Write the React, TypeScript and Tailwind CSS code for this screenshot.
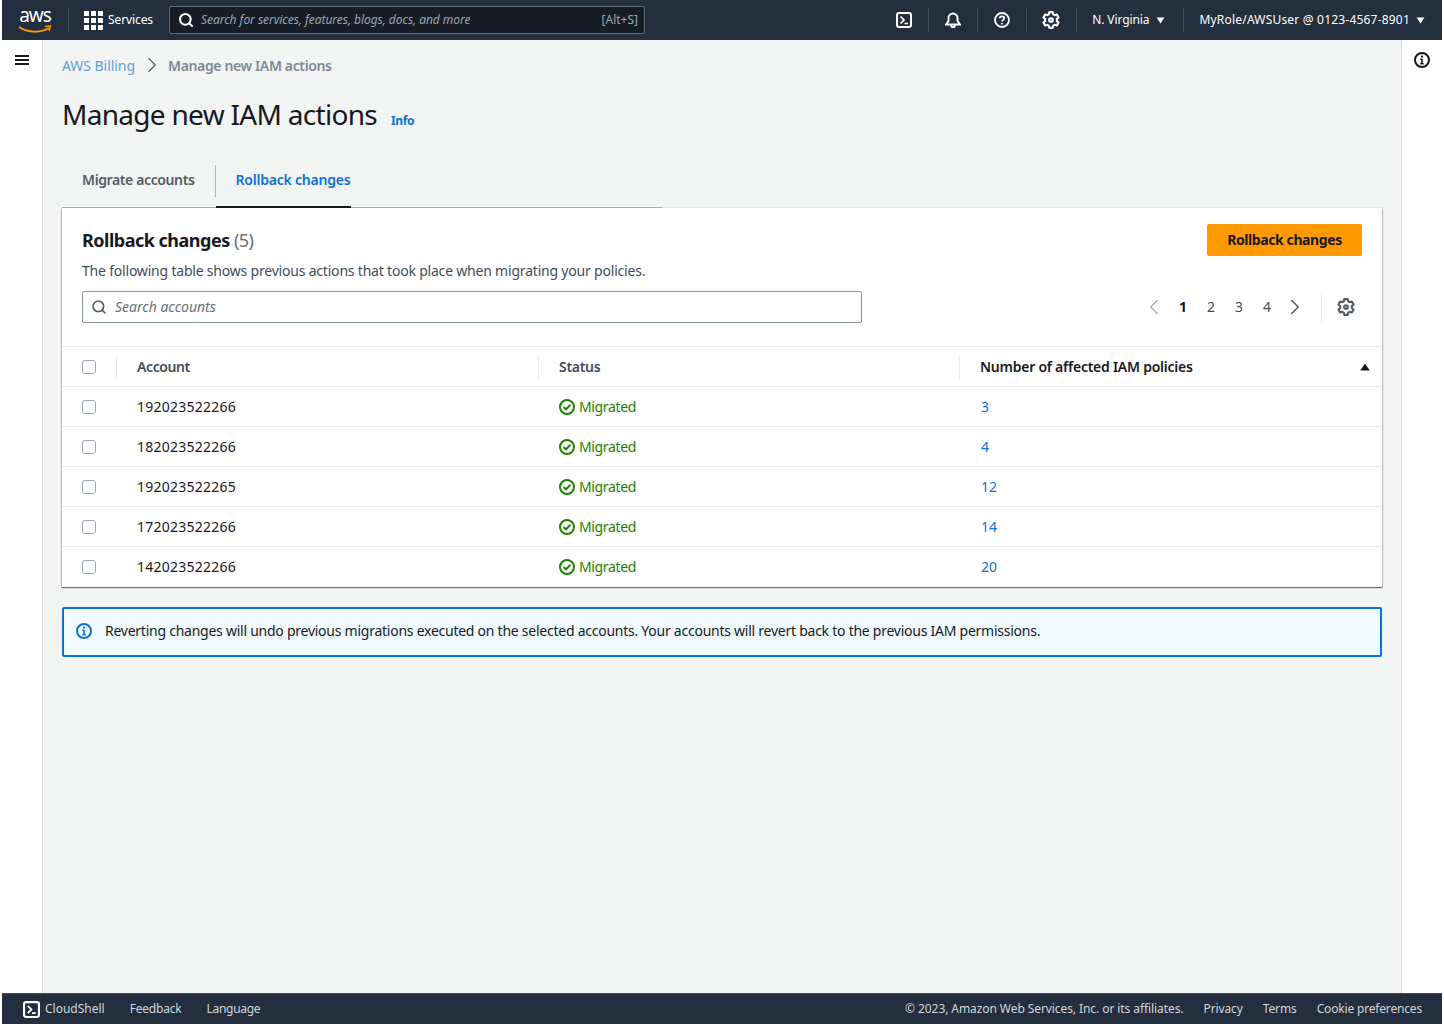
import React from "react";
import { ChevronLeft, ChevronRight, Search } from "lucide-react";

const font = "font-['Noto_Sans',sans-serif]";

const rows = [
  { account: "192023522266", count: "3" },
  { account: "182023522266", count: "4" },
  { account: "192023522265", count: "12" },
  { account: "172023522266", count: "14" },
  { account: "142023522266", count: "20" },
];

const Divider = () => <div className="h-[24px] w-px bg-[#414d5c]" />;

const Caret = ({ className = "" }: { className?: string }) => (
  <svg viewBox="0 0 10 8" className={className} fill="currentColor">
    <path d="M0.5 0.5h9L5 7.5z" />
  </svg>
);

const ShellIcon = ({ className = "" }: { className?: string }) => (
  <svg viewBox="0 0 16 16" className={className} fill="none" stroke="currentColor" strokeWidth="2">
    <rect x="1" y="1" width="14" height="14" rx="2" />
    <path d="M4.5 4.5 8 8l-3.5 3.5M8.5 11.5h3.5" strokeWidth="1.7" />
  </svg>
);

const InfoIcon = ({ className = "" }: { className?: string }) => (
  <svg viewBox="0 0 16 16" className={className} fill="none" stroke="currentColor" strokeWidth="2">
    <circle cx="8" cy="8" r="7" />
    <path d="M8 7v5M6.3 7.2H8M6.3 11.8h3.4" strokeWidth="1.6" />
    <path d="M8 3.6v1.8" strokeWidth="2" />
  </svg>
);

const CheckCircle = () => (
  <svg viewBox="0 0 16 16" className="h-4 w-4 text-[#1d8102]" fill="none" stroke="currentColor" strokeWidth="2">
    <circle cx="8" cy="8" r="7" />
    <path d="M4.6 8 7 10.4 11.4 5.8" />
  </svg>
);

const Checkbox = () => <div className="h-[14px] w-[14px] rounded-[3px] border border-[#9ba7b6] bg-white" />;

const GridIcon = () => (
  <div className="grid grid-cols-3 gap-[2px]">
    {Array.from({ length: 9 }).map((_, i) => (
      <div key={i} className="h-[5px] w-[5px] bg-white" />
    ))}
  </div>
);

// cog drawn by hand, lucide's has thinner teeth
const Gear = ({ className = "" }: { className?: string }) => (
  <svg viewBox="0 0 16 16" className={className} fill="none" stroke="currentColor" strokeWidth="1.9" strokeLinejoin="round">
    <path d="M6.5 1h3l.5 2 1.2.7 2-.6 1.5 2.6-1.5 1.4v1.8l1.5 1.4-1.5 2.6-2-.6-1.2.7-.5 2h-3l-.5-2-1.2-.7-2 .6-1.5-2.6 1.5-1.4V7.1L1.3 5.7l1.5-2.6 2 .6L6 3z" />
    <circle cx="8" cy="8" r="1.6" />
  </svg>
);

const Header = () => (
  <header className="flex h-10 shrink-0 items-center bg-[#232f3e] text-white">
    <div className="ml-[15px] flex w-[36px] flex-col items-center">
      <span className="h-[17px] text-[19px] leading-[17px] tracking-[-1px]">aws</span>
      <svg viewBox="0 0 34 9" className="mt-[1px] h-[9px] w-[34px]" fill="none">
        <path d="M1 2c9 6 22 6 30 1" stroke="#ff9900" strokeWidth="2" />
        <path d="M27 1.5 32.5 1 31 6" stroke="#ff9900" strokeWidth="1.4" />
      </svg>
    </div>
    <div className="ml-[15px] h-[24px] w-px bg-[#414d5c]" />
    <div className="ml-[15px] flex items-center gap-[5px]">
      <GridIcon />
      <span className="text-[12px] tracking-[-0.1px]">Services</span>
    </div>
    <div className="ml-[16px] flex h-[28px] w-[476px] items-center rounded-[2px] border border-[#5f6b7a] bg-[#161d26] pl-[8px] pr-[6px]">
      <Search className="h-4 w-4" strokeWidth={3} />
      <span className="ml-[7px] flex-1 text-[12px] italic tracking-[-0.04px] text-[#95a5b4]">Search for services, features, blogs, docs, and more</span>
      <span className="text-[12px] text-[#95a5b4]">[Alt+S]</span>
    </div>
    <div className="ml-auto flex items-center">
      <ShellIcon className="h-[16px] w-[16px]" />
      <div className="ml-[16px]"><Divider /></div>
      <svg viewBox="0 0 16 16" className="ml-[16px] h-[16px] w-[16px]" fill="none" stroke="currentColor" strokeWidth="1.9">
        <path d="M1 12.5h14L12.5 9V6a4.5 4.5 0 0 0-9 0v3zM8 .5v1.5M6 13c0 3 4 3 4 0" />
      </svg>
      <div className="ml-[16px]"><Divider /></div>
      <svg viewBox="0 0 16 16" className="ml-[16px] h-[16px] w-[16px]" fill="none" stroke="currentColor" strokeWidth="1.8">
        <circle cx="8" cy="8" r="7" />
        <path d="M5.8 6.2C5.8 3.7 10.2 3.7 10.2 6.2 10.2 7.8 8 7.9 8 9.6M8 11v1.6" />
      </svg>
      <div className="ml-[16px]"><Divider /></div>
      <Gear className="ml-[15px] h-[18px] w-[18px]" />
      <div className="ml-[16px]"><Divider /></div>
      <span className="ml-[15px] text-[12px] tracking-[-0.1px]">N. Virginia</span>
      <Caret className="ml-[7px] h-[7px] w-[9px]" />
      <div className="ml-[18px]"><Divider /></div>
      <span className="ml-[15px] text-[12px] tracking-[0.2px]">MyRole/AWSUser @ 0123-4567-8901</span>
      <Caret className="ml-[6px] mr-[17px] h-[7px] w-[9px]" />
    </div>
  </header>
);

const Footer = () => (
  <footer className="flex h-[31px] shrink-0 items-center border-t border-[#414d5c] bg-[#232f3e] text-[12px] text-[#d1d5db]">
    <ShellIcon className="ml-[21px] h-[17px] w-[17px] text-white" />
    <span className="ml-[5px]">CloudShell</span>
    <span className="ml-[25px] tracking-[-0.2px]">Feedback</span>
    <span className="ml-[25px] tracking-[-0.3px]">Language</span>
    <div className="ml-auto mr-[20px] flex gap-[20px]">
      <span className="tracking-[-0.08px]">© 2023, Amazon Web Services, Inc. or its affiliates.</span>
      <span className="tracking-[-0.12px]">Privacy</span>
      <span className="tracking-[-0.12px]">Terms</span>
      <span className="tracking-[-0.17px]">Cookie preferences</span>
    </div>
  </footer>
);

const Table = () => (
  <div className="text-[14px]">
    <div className="flex h-[41px] items-center border-y border-[#e9ebed] font-semibold text-[#414d5c]">
      <div className="flex w-[55px] items-center justify-between pl-5">
        <Checkbox />
        <div className="h-6 w-px bg-[#e9ebed]" />
      </div>
      <div className="flex h-6 w-[422px] items-center border-r border-[#e9ebed] pl-5 tracking-[-0.4px]">Account</div>
      <div className="flex h-6 w-[421px] items-center border-r border-[#e9ebed] pl-5 tracking-[-0.3px]">Status</div>
      <div className="flex h-6 flex-1 items-center pl-5 pr-3 text-[#16191f]">
        <span className="tracking-[-0.25px]">Number of affected IAM policies</span>
        <svg viewBox="0 0 10 8" className="ml-auto h-[8px] w-[10px] fill-[#16191f]"><path d="M5 0.5 9.8 7.5H.2z" /></svg>
      </div>
    </div>
    {rows.map((r, i) => (
      <div key={r.account} className={`flex h-10 items-center border-b text-[#16191f] ${i < rows.length - 1 ? "border-[#e9ebed]" : "border-transparent"}`}>
        <div className="w-[55px] pl-5"><Checkbox /></div>
        <div className="w-[422px] pl-5 tracking-[0.25px]">{r.account}</div>
        <div className="flex w-[421px] items-center gap-1 pl-5 tracking-[-0.35px] text-[#1d8102]">
          <CheckCircle />
          Migrated
        </div>
        <div className="pl-[21px] text-[#0972d3]">{r.count}</div>
      </div>
    ))}
  </div>
);

const Card = () => (
  <section className="bg-white shadow-[0_0_1px_0_rgba(0,28,36,0.3),0_1px_1px_0_rgba(0,28,36,0.4),1px_1px_1px_0_rgba(0,28,36,0.15),-1px_1px_1px_0_rgba(0,28,36,0.15)]">
    <div className="flex items-start px-5 pt-4">
      <div className="flex-1">
        <h2 className="h-8 text-[18px] font-bold leading-8 tracking-[-0.5px] text-[#16191f]">
          Rollback changes <span className="font-normal text-[#687078]">(5)</span>
        </h2>
        <p className="mt-[7px] text-[14px] leading-[16px] tracking-[-0.2px] text-[#414d5c]">
          The following table shows previous actions that took place when migrating your policies.
        </p>
      </div>
      <button className="h-8 w-[155px] rounded-[2px] bg-[#ff9900] pb-[2px] text-[14px] font-bold tracking-[-0.4px] text-[#16191f]">Rollback changes</button>
    </div>
    <div className="flex items-center pb-[23px] pl-5 pr-[27px] pt-3">
      <div className="flex h-8 w-[780px] items-center rounded-[2px] border border-[#879596] pl-[8px]">
        <Search className="h-4 w-4 text-[#545b64]" strokeWidth={2.4} />
        <span className="mb-[2px] ml-[8px] text-[14px] italic text-[#687078]">Search accounts</span>
      </div>
      <div className="ml-auto flex items-center text-[14px] text-[#414d5c]">
        <ChevronLeft className="h-[26px] w-[26px] text-[#aab7b8]" strokeWidth={1.5} />
        <div className="mb-[2px] ml-[2px] flex w-[112px] justify-around">
          <span className="font-bold text-[#16191f]">1</span>
          <span>2</span>
          <span>3</span>
          <span>4</span>
        </div>
        <ChevronRight className="ml-[1px] h-[26px] w-[26px] text-[#545b64]" strokeWidth={1.5} />
        <div className="ml-[13px] h-8 w-px bg-[#e9ebed]" />
        <Gear className="ml-[15px] h-[18px] w-[18px] text-[#545b64]" />
      </div>
    </div>
    <Table />
  </section>
);

export default function App() {
  return (
    <div className={`flex h-[1024px] w-[1444px] flex-col overflow-hidden bg-white px-[2px] ${font}`}>
      <Header />
      <div className="flex min-h-0 flex-1">
        <aside className="w-[41px] shrink-0 border-r border-[#d5dbdb] pl-[13px] pt-[15px]">
          <div className="flex h-[10px] w-[14px] flex-col justify-between">
            <div className="h-[2px] bg-[#16191f]" />
            <div className="h-[2px] bg-[#16191f]" />
            <div className="h-[2px] bg-[#16191f]" />
          </div>
        </aside>
        <main className="min-w-0 flex-1 bg-[#f2f3f3] px-[19px]">
          <nav className="flex h-[52px] items-center pb-[2px] text-[14px]">
            <span className="tracking-[-0.05px] text-[#5ea2e0]">AWS Billing</span>
            <ChevronRight className="ml-[4px] h-[26px] w-[26px] text-[#687078]" strokeWidth={1.4} />
            <span className="ml-[3px] font-semibold tracking-[-0.36px] text-[#7d8998]">Manage new IAM actions</span>
          </nav>
          <div className="flex h-[44px] items-center">
            <h1 className="text-[28px] font-normal tracking-[-0.7px] text-[#16191f]">Manage new IAM actions</h1>
            <span className="ml-[14px] mt-[13px] text-[12px] font-bold tracking-[-0.4px] text-[#0972d3]">Info</span>
          </div>
          <div className="mt-[22px] flex h-[50px] w-[600px] items-start border-b border-[#aab7b8] text-[14px] font-semibold">
            <div className="flex h-[43px] items-center px-5 tracking-[-0.38px] text-[#545b64]">Migrate accounts</div>
            <div className="mt-[7px] h-[32px] w-px bg-[#aab7b8]" />
            <div className="flex h-[50px] w-[135px] items-center border-b-2 border-[#16191f] pb-[5px] pl-5 tracking-[-0.22px] text-[#0972d3]">Rollback changes</div>
          </div>
          <Card />
          <div className="mt-5 flex h-[50px] items-center rounded-[2px] border-2 border-[#0972d3] bg-[#f1faff] pb-[2px] pl-[12px] text-[14px] text-[#16191f]">
            <InfoIcon className="h-[16px] w-[16px] text-[#0972d3]" />
            <span className="mb-[2px] ml-[13px] tracking-[-0.25px]">
              Reverting changes will undo previous migrations executed on the selected accounts. Your accounts will revert back to the previous IAM permissions.
            </span>
          </div>
        </main>
        <aside className="flex w-[41px] shrink-0 justify-center border-l border-[#d5dbdb] pt-[12px]">
          <InfoIcon className="h-[16px] w-[16px] text-[#16191f]" />
        </aside>
      </div>
      <Footer />
    </div>
  );
}
